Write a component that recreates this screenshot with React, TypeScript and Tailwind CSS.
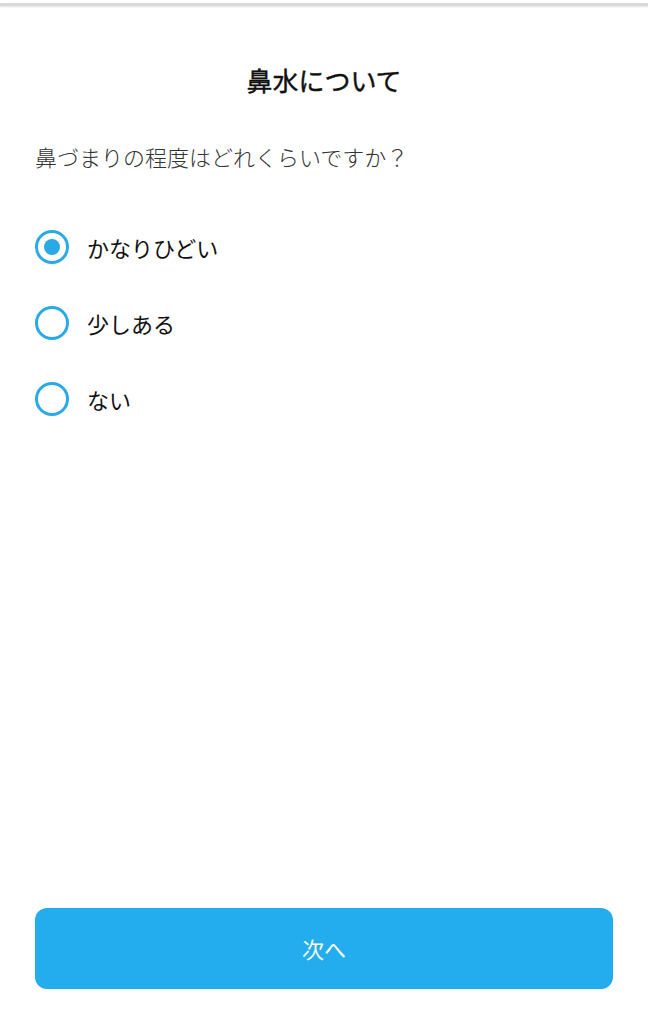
import React, { useState } from "react";

const options = ["かなりひどい", "少しある", "ない"];

export default function App() {
  const [sel, setSel] = useState(0);
  return (
    <div
      className="flex h-[1024px] w-[648px] flex-col bg-white"
      style={{ fontFamily: '"Noto Sans CJK JP", "Noto Sans", sans-serif' }}
    >
      <div className="mt-[3px] h-[3px] w-full bg-[#d9d9d9] shadow-[0_1px_2px_rgba(0,0,0,0.12)]" />
      <h1 className="mt-[56px] text-center text-[26px] font-normal leading-[36px] text-[#111] [-webkit-text-stroke:0.4px_#111]">
        鼻水について
      </h1>
      <p className="mt-[42px] pl-[35px] text-[22px] font-light leading-[32px] text-[#333]">
        鼻づまりの程度はどれくらいですか？
      </p>
      <div className="mt-[58px] flex flex-col gap-[42px] pl-[35px]">
        {options.map((o, i) => (
          <button
            key={o}
            onClick={() => setSel(i)}
            className="flex h-[34px] items-center gap-[18px] text-left"
          >
            <span className="flex h-[34px] w-[34px] items-center justify-center rounded-full border-[3px] border-[#29a9e6]">
              {sel === i && <span className="h-[16px] w-[16px] rounded-full bg-[#29a9e6]" />}
            </span>
            <span className="text-[22px] leading-[32px] text-[#111]">{o}</span>
          </button>
        ))}
      </div>
      <div className="mt-auto px-[35px] pb-[35px]">
        <button className="flex h-[81px] w-full items-center justify-center rounded-[12px] bg-[#23acee] text-[22px] text-white">
          次へ
        </button>
      </div>
    </div>
  );
}
